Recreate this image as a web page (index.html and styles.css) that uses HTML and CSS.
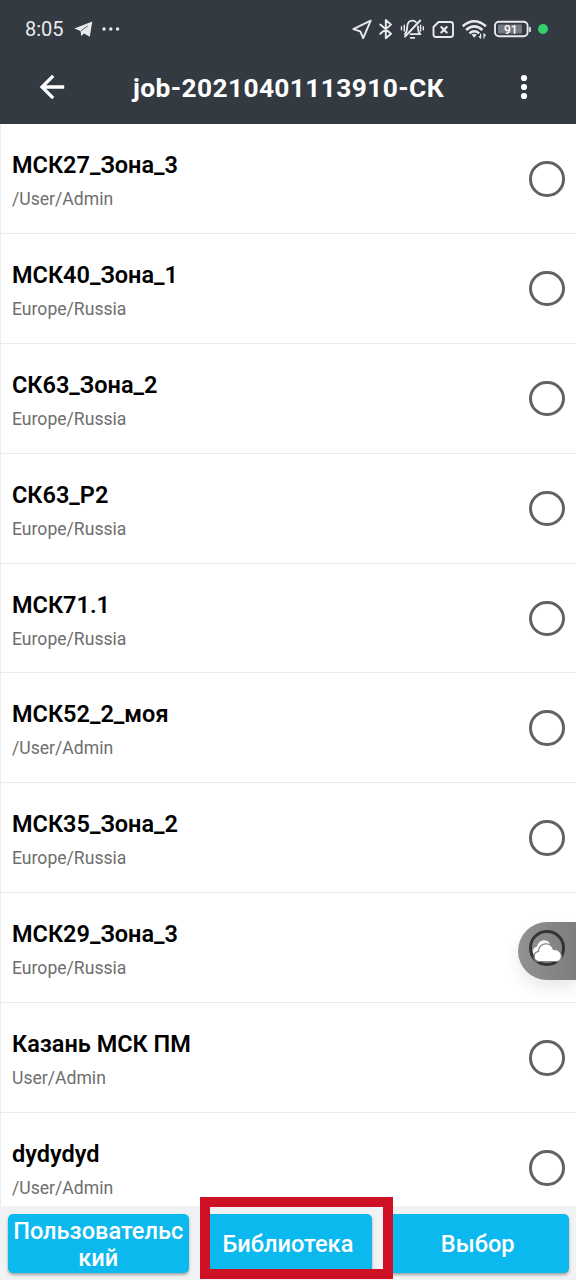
FILE: index.html
```html
<!DOCTYPE html>
<html lang="ru">
<head>
<meta charset="utf-8">
<title>job-20210401113910-СК</title>
<link rel="stylesheet" href="styles.css">
</head>
<body>
<div class="screen">
  <header class="header">
    <div class="status">
      <span class="clock">8:05</span>
      <svg class="telegram" width="19" height="17" viewBox="0 0 19 17"><path d="M0.3 7.6 18.3 0.6 15.8 15.8 10 12.5 7.3 15 6.5 10Z" fill="#e9eaec"/><path d="M7 9.8 13.8 5" fill="none" stroke="#343a42" stroke-width=".8"/></svg>
      <svg class="more" width="18" height="4" viewBox="0 0 18 4" fill="#e9eaec"><circle cx="2" cy="2" r="1.7"/><circle cx="8.8" cy="2" r="1.7"/><circle cx="15.6" cy="2" r="1.7"/></svg>
      <svg class="tray" width="200" height="26" viewBox="350 16 200 26" fill="none" stroke="#e9eaec" stroke-width="1.9" stroke-linejoin="round" stroke-linecap="round">
        <path d="M370.7 20.7 353.3 29.2 360.3 31.3 363.2 38.2Z"/>
        <path d="M380.3 24.5 391 33.8 385.8 38.3V20L391 24.6 380.3 33.8"/>
        <g stroke-width="1.8">
          <path d="M404.8 34.2C407.3 32.2 407 29.5 407.2 27 407.5 23 409.5 20.7 412.3 20.7 414 20.7 415.2 21.2 416 22.3M418 26.5C417.8 30 418.2 32.5 420.5 34.2H410.5"/>
          <path d="M405 36.6 420.2 20.5" stroke-width="2"/>
          <path d="M410.7 37.8H414.3"/>
          <path d="M404.3 25.2V31M401.5 26.7V29.7M420.6 25.2V31M423.3 26.7V29.7" stroke-width="1.4"/>
        </g>
        <path d="M438.5 22H450.5Q453 22 453 24.5V34.5Q453 37 450.5 37H436Q433.5 37 433.5 34.5V27Z"/>
        <path d="M441.3 27 446.7 32.4M446.7 27 441.3 32.4" stroke-width="2.1"/>
        <g stroke-width="2.5" stroke-linecap="butt">
          <path d="M462.7 26.3Q474.3 16.3 485.9 26.3M466.1 30Q474.3 22.7 482.5 30M469.4 33.4Q474.3 29.2 479.2 33.4"/>
        </g>
        <path d="M471.7 34.7Q474.2 32.9 476.7 34.7L474.2 37.7Z" fill="#e9eaec" stroke="none"/>
        <path d="M480.6 34V38M480.6 38 479.3 36.5M484 38V34M484 34 485.3 35.5" stroke-width="1.2"/>
        <rect x="495" y="21.8" width="32.6" height="14.5" rx="4"/>
        <rect x="498" y="24.6" width="24" height="9" rx="1" fill="#777a80" stroke="none"/>
        <path d="M530 27.5V31.2" stroke-width="1.7"/>
        <text class="battery" x="510.8" y="33.5" text-anchor="middle">91</text>
        <circle cx="543" cy="29" r="5" fill="#32d16c" stroke="none"/>
      </svg>
    </div>
    <div class="toolbar">
      <svg class="back" width="26" height="26" viewBox="0 0 26 26" fill="none" stroke="#fff" stroke-width="3.3"><path d="M14.2 1.8 3 13 14.2 24.2M3 13H25.2"/></svg>
      <h1 class="title">job-20210401113910-СК</h1>
      <svg class="menu" width="8" height="26" viewBox="0 0 8 26" fill="#fff"><circle cx="4" cy="4" r="3.1"/><circle cx="4" cy="13" r="3.1"/><circle cx="4" cy="22" r="3.1"/></svg>
    </div>
  </header>
  <main class="list">
    <div class="row"><div><div class="name">МСК27_Зона_3</div><div class="path">/User/Admin</div></div><span class="radio"></span></div>
    <div class="row"><div><div class="name">МСК40_Зона_1</div><div class="path">Europe/Russia</div></div><span class="radio"></span></div>
    <div class="row"><div><div class="name">СК63_Зона_2</div><div class="path">Europe/Russia</div></div><span class="radio"></span></div>
    <div class="row"><div><div class="name">СК63_Р2</div><div class="path">Europe/Russia</div></div><span class="radio"></span></div>
    <div class="row"><div><div class="name">МСК71.1</div><div class="path">Europe/Russia</div></div><span class="radio"></span></div>
    <div class="row"><div><div class="name">МСК52_2_моя</div><div class="path">/User/Admin</div></div><span class="radio"></span></div>
    <div class="row"><div><div class="name">МСК35_Зона_2</div><div class="path">Europe/Russia</div></div><span class="radio"></span></div>
    <div class="row"><div><div class="name">МСК29_Зона_3</div><div class="path">Europe/Russia</div></div><span class="radio"></span></div>
    <div class="row"><div><div class="name">Казань МСК ПМ</div><div class="path">User/Admin</div></div><span class="radio"></span></div>
    <div class="row"><div><div class="name">dydydyd</div><div class="path">/User/Admin</div></div><span class="radio"></span></div>
  </main>
  <footer class="actions">
    <button class="btn">Пользовательс<br>кий</button>
    <button class="btn btn-library">Библиотека</button>
    <button class="btn">Выбор</button>
  </footer>
  <div class="bubble">
    <svg width="30" height="24" viewBox="0 0 30 24"><path d="M3.5 17C-0.5 14 0 9 5 7.500 7 0 15.500 -0.500 18 5L17 12 6 15Z" fill="#f8f8f8"/><path d="M7.500 22.500C0.500 22.500 0.500 13.500 6.500 12.300 7.500 3 19 2.500 21.500 10.500 27.500 10 30.500 15 29 19.500Q28 22.500 25 22.500Z" fill="#fff" stroke="#858585" stroke-width="1.2"/></svg>
  </div>
  <div class="highlight"></div>
</div>
</body>
</html>
```
FILE: styles.css
```css
* { box-sizing: border-box; }
body { margin: 0; font-family: Roboto, "Liberation Sans", sans-serif; background: #fff; }
.screen { position: relative; display: flex; flex-direction: column; width: 576px; height: 1280px; overflow: hidden; }
.header { flex: none; height: 124px; background: #343a42; }
.status { display: flex; align-items: center; height: 58px; padding: 0 26px 0 25px; color: #e9eaec; }
.clock { width: 39px; font-size: 20px; white-space: nowrap; }
.telegram { margin-left: 10px; }
.more { margin-left: 9px; }
.tray { margin-left: auto; }
.battery { fill: #fff; stroke: none; font-size: 12px; font-weight: 500; }
.toolbar { display: flex; align-items: center; height: 58px; padding: 0 48px 0 39px; }
.title { flex: 1; margin: 2px 0 0 68px; color: #fff; font-size: 26.3px; line-height: 30px; font-weight: 700; letter-spacing: .4px; white-space: nowrap; }
.list { flex: 1; min-height: 0; overflow: hidden; border-left: 1px solid #ededed; }
.row { display: flex; justify-content: space-between; height: 109.9px; padding: 26px 11.5px 0 11px; border-bottom: 1px solid #ebebeb; }
.name { color: #000; font-size: 23.5px; line-height: 30px; font-weight: 600; white-space: nowrap; }
.path { margin-top: 8px; color: #6e6e6e; font-size: 17.6px; line-height: 22px; white-space: nowrap; }
.radio { width: 35.5px; height: 35.5px; margin-top: 11px; border: 3px solid #626266; border-radius: 50%; }
.actions { flex: none; display: flex; justify-content: space-between; height: 74px; padding: 8px 7.5px 7px 7.5px; background: #f1f2f3; }
.btn { width: 181.5px; height: 59px; padding: 2px 0 0; border: 0; border-radius: 5px; background: #0cb9ee; color: #fff; font: 500 23.6px/27px Roboto, "Liberation Sans", sans-serif; white-space: nowrap; box-shadow: 0 2px 3px rgba(0, 0, 0, .32); }
.btn-library { width: 167px; }
.bubble { position: absolute; left: 518px; top: 922px; width: 58px; height: 58px; padding: 17px 0 0 14px; border-radius: 29px 0 0 29px; background: linear-gradient(90deg, rgba(0, 0, 0, .43), rgba(0, 0, 0, .51)); box-shadow: 0 8px 16px rgba(0, 0, 0, .09); }
.highlight { position: absolute; left: 200px; top: 1196.5px; width: 193px; height: 82px; border: 10px solid #cf1125; }
```
